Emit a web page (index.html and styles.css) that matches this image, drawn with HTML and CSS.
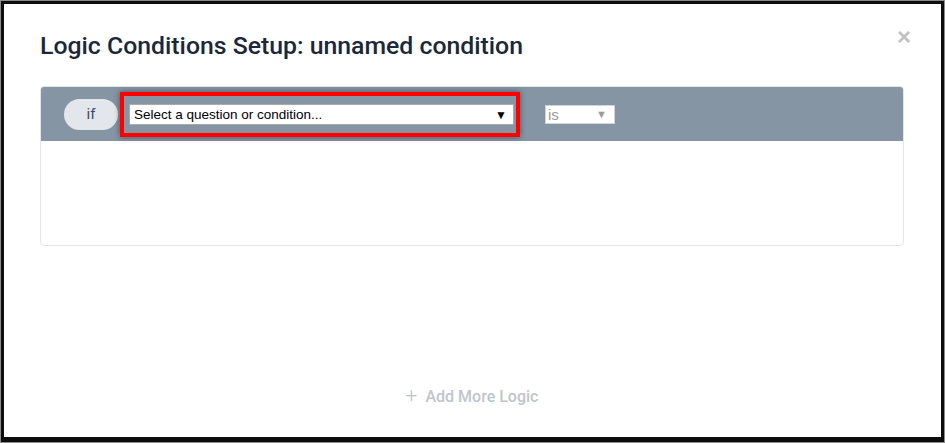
FILE: index.html
```html
<!DOCTYPE html>
<html lang="en">
<head>
    <meta charset="UTF-8">
    <meta name="viewport" content="width=device-width, initial-scale=1.0">
    <title>Logic Conditions Setup</title>
    <link rel="stylesheet" href="styles.css">
</head>
<body>
    <div class="modal">
        <button class="close" type="button" aria-label="Close">&times;</button>
        <h1 class="modal-title">Logic Conditions Setup: unnamed condition</h1>

        <div class="condition">
            <div class="condition-head">
                <span class="if-pill">if</span>
                <div class="highlight">
                    <div class="select select-question">
                        <span>Select a question or condition...</span>
                        <span class="arrow">&#9660;</span>
                    </div>
                </div>
                <div class="select select-op">
                    <span>is</span>
                    <span class="arrow">&#9660;</span>
                </div>
            </div>
            <div class="condition-body"></div>
        </div>

        <div class="add-more">
            <span class="plus">+</span> Add More Logic
        </div>
    </div>
</body>
</html>
```

FILE: styles.css
```css
html, body {
    margin: 0;
    padding: 0;
}
body {
    width: 945px;
    height: 443px;
    box-sizing: border-box;
    padding: 1px;
    background-color: #8c8c8c;
    font-family: Roboto, "Liberation Sans", Arial, sans-serif;
}
.modal {
    position: relative;
    box-sizing: border-box;
    height: 100%;
    background: #fff;
    border: 3px solid #0d0d0d;
    border-bottom-width: 5px;
    padding: 28px 37px 0 36px;
}
.close {
    position: absolute;
    top: 21px;
    right: 30px;
    border: none;
    background: none;
    padding: 0;
    font-family: Arial, sans-serif;
    font-size: 24px;
    font-weight: bold;
    line-height: 24px;
    color: #c2c2c2;
    cursor: pointer;
}
.modal-title {
    margin: 0;
    font-size: 24.8px;
    line-height: 28px;
    font-weight: 500;
    color: #1c2737;
}
.condition {
    margin-top: 26px;
    border: 1px solid #e3e5e8;
    border-radius: 4px;
    overflow: hidden;
}
.condition-head {
    display: flex;
    align-items: center;
    height: 54px;
    padding-left: 23px;
    background-color: #8595a4;
}
.if-pill {
    width: 54px;
    height: 31px;
    line-height: 31px;
    border-radius: 16px;
    background-color: #e3e7eb;
    text-align: center;
    font-size: 15px;
    color: #3c4b68;
}
.highlight {
    box-sizing: border-box;
    width: 400px;
    height: 45px;
    margin-left: 2px;
    margin-top: 1px;
    padding: 8px 2px 8px 5px;
    border: 4px solid #ff0000;
    box-shadow: 0 0 6px rgba(0, 0, 0, 0.45);
}
.select {
    display: flex;
    align-items: center;
    justify-content: space-between;
    box-sizing: border-box;
    background: #fff;
    font-family: "Liberation Sans", Arial, sans-serif;
}
.select-question {
    height: 21px;
    padding: 0 6px 0 4px;
    border: 1px solid #a9a9a9;
    font-size: 13.5px;
    color: #000;
}
.select-question .arrow {
    font-size: 12px;
}
.select-op {
    width: 70px;
    height: 19px;
    margin-left: 25px;
    padding: 0 7px 0 2px;
    border: 1px solid #d3d3d3;
    font-size: 15px;
    color: #9a9a9a;
}
.select-op .arrow {
    font-size: 11px;
    color: #9a9a9a;
}
.condition-body {
    height: 104px;
}
.add-more {
    margin-top: 139px;
    text-align: center;
    font-size: 16px;
    line-height: 20px;
    font-weight: 500;
    color: #bfc5cc;
}
.plus {
    font-size: 21px;
    font-weight: 300;
    margin-right: 4px;
}
```
